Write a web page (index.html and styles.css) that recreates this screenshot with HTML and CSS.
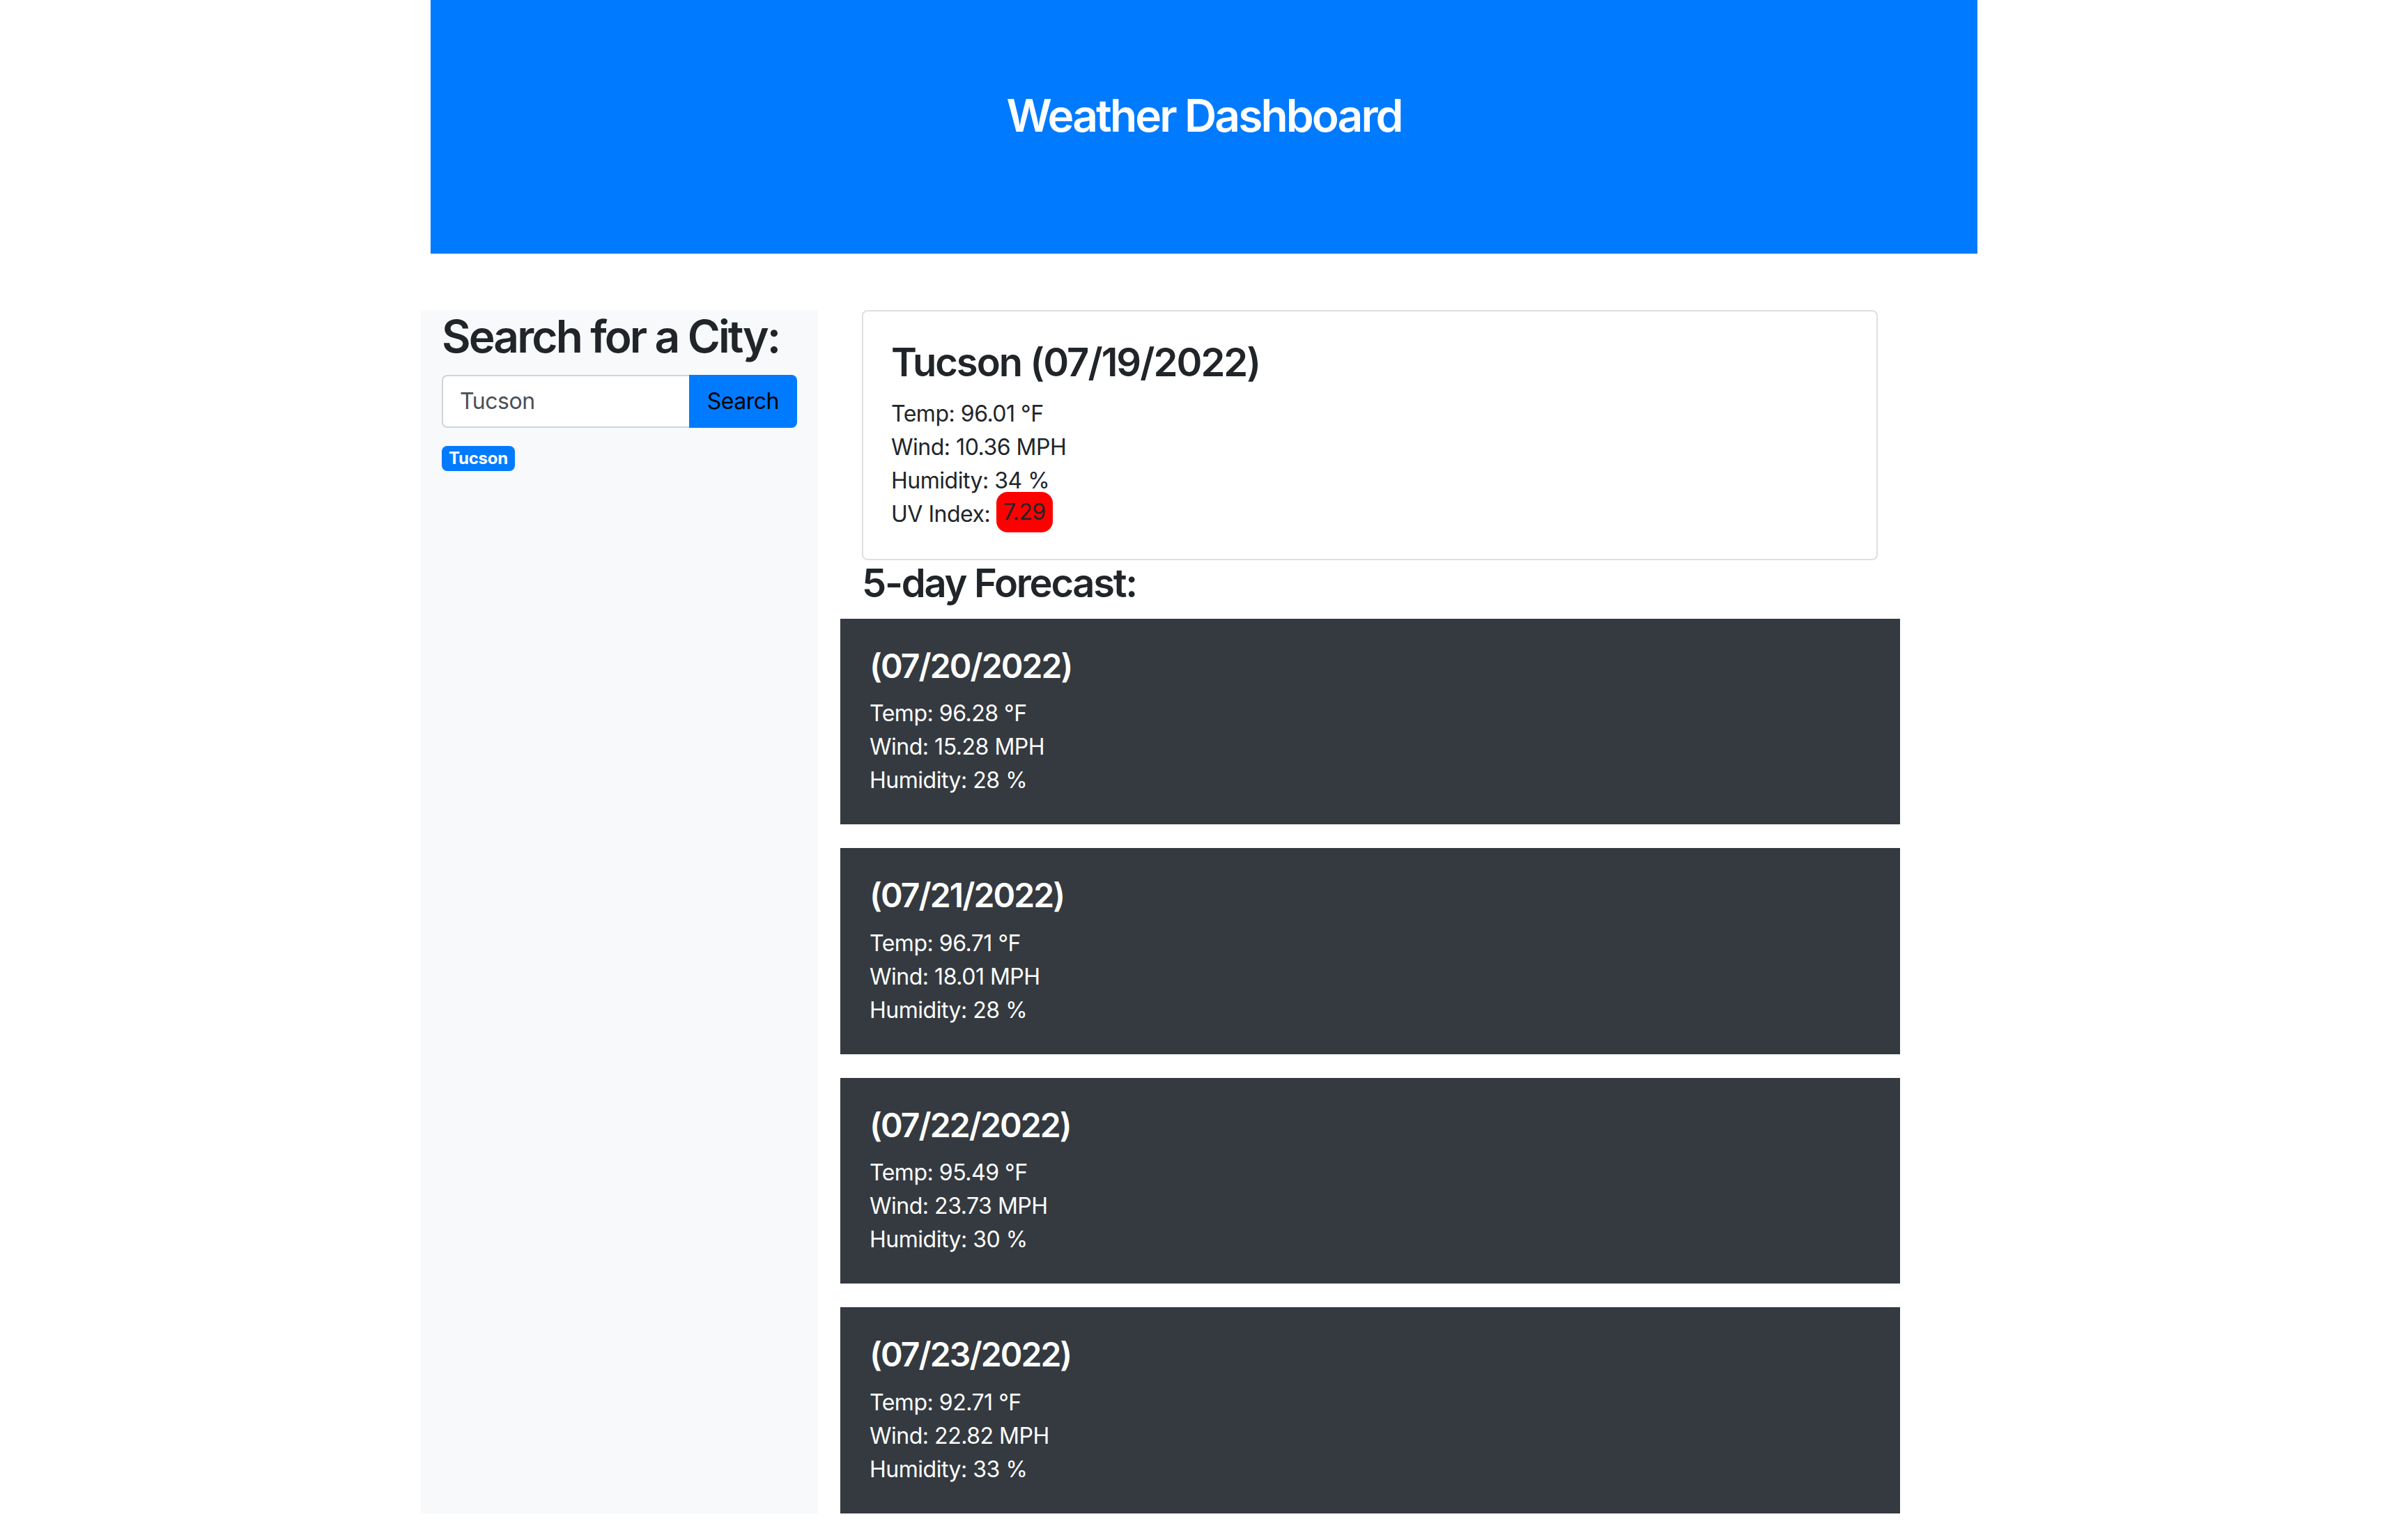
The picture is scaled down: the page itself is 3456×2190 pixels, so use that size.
FILE: index.html
```html
<!DOCTYPE html>
<html lang="en">
<head>
<meta charset="utf-8">
<title>Weather Dashboard</title>
<link rel="stylesheet" href="styles.css">
</head>
<body>
<div class="page">
  <header class="hero">
    <h1 class="hero-title">Weather Dashboard</h1>
  </header>
  <div class="content">
    <aside class="sidebar">
      <h2 class="side-title">Search for a City:</h2>
      <div class="search-group">
        <input class="search-input" type="text" value="Tucson">
        <button class="search-btn" type="button">Search</button>
      </div>
      <div class="history">
        <span class="city-badge">Tucson</span>
      </div>
    </aside>
    <main class="main">
      <section class="current-card">
        <h3 class="current-title">Tucson (07/19/2022)</h3>
        <div class="line">Temp: 96.01 °F</div>
        <div class="line">Wind: 10.36 MPH</div>
        <div class="line">Humidity: 34 %</div>
        <div class="line">UV Index: <span class="uv">7.29</span></div>
      </section>
      <h3 class="forecast-title">5-day Forecast:</h3>
      <div class="forecast-list">
        <div class="day-card">
          <h4 class="day-title">(07/20/2022)</h4>
          <div class="line">Temp: 96.28 °F</div>
          <div class="line">Wind: 15.28 MPH</div>
          <div class="line">Humidity: 28 %</div>
        </div>
        <div class="day-card">
          <h4 class="day-title">(07/21/2022)</h4>
          <div class="line">Temp: 96.71 °F</div>
          <div class="line">Wind: 18.01 MPH</div>
          <div class="line">Humidity: 28 %</div>
        </div>
        <div class="day-card">
          <h4 class="day-title">(07/22/2022)</h4>
          <div class="line">Temp: 95.49 °F</div>
          <div class="line">Wind: 23.73 MPH</div>
          <div class="line">Humidity: 30 %</div>
        </div>
        <div class="day-card">
          <h4 class="day-title">(07/23/2022)</h4>
          <div class="line">Temp: 92.71 °F</div>
          <div class="line">Wind: 22.82 MPH</div>
          <div class="line">Humidity: 33 %</div>
        </div>
      </div>
    </main>
  </div>
</div>
</body>
</html>
```

FILE: styles.css
```css
* {
  box-sizing: border-box;
}

body {
  margin: 0;
  background: #ffffff;
  color: #212529;
  font-family: Inter, "Liberation Sans", Arial, sans-serif;
  font-size: 32px;
  line-height: 1.5;
  letter-spacing: -0.015em;
}

.page {
  width: 2220px;
  margin: 0 auto;
}

.hero {
  height: 364px;
  background: #007bff;
  padding-top: 128px;
  text-align: center;
}

.hero-title {
  margin: 0;
  color: #ffffff;
  font-size: 64px;
  font-weight: 600;
  line-height: 1.2;
  letter-spacing: -0.045em;
}

.content {
  display: flex;
  gap: 63px;
  margin-top: 81px;
  margin-left: -14px;
}

.sidebar {
  width: 570px;
  flex: none;
  background: #f8f9fa;
  padding: 0 30px;
}

.side-title {
  margin: 0 0 16px;
  font-size: 64px;
  font-weight: 600;
  line-height: 1.2;
  letter-spacing: -0.045em;
  white-space: nowrap;
}

.search-group {
  display: flex;
  height: 76px;
}

.search-input {
  flex: 1;
  min-width: 0;
  height: 76px;
  border: 2px solid #ced4da;
  border-right: none;
  border-radius: 8px 0 0 8px;
  padding: 0 24px;
  font-family: Inter, "Liberation Sans", Arial, sans-serif;
  font-size: 32px;
  letter-spacing: -0.015em;
  color: #495057;
  background: #ffffff;
  outline: none;
}

.search-btn {
  height: 76px;
  border: 2px solid #007bff;
  border-radius: 0 8px 8px 0;
  background: #007bff;
  color: #000000;
  padding: 0 24px;
  font-family: Inter, "Liberation Sans", Arial, sans-serif;
  font-size: 32px;
  letter-spacing: -0.015em;
  line-height: 1.5;
}

.history {
  display: flex;
  margin-top: 26px;
}

.city-badge {
  background: #007bff;
  color: #ffffff;
  font-size: 24px;
  font-weight: 700;
  line-height: 1;
  letter-spacing: -0.01em;
  padding: 6px 10px;
  border-radius: 8px;
}

.main {
  width: 1458px;
  flex: none;
}

.current-card {
  border: 2px solid #dfdfdf;
  border-radius: 8px;
  padding: 40px 40px 38px;
}

.current-title {
  margin: 0 0 16px;
  font-size: 56px;
  font-weight: 600;
  line-height: 1.2;
  letter-spacing: -0.035em;
}

.line {
  line-height: 48px;
}

.uv {
  display: inline-block;
  background: #ff0000;
  border-radius: 16px;
  padding: 0 10px;
  line-height: 58px;
  vertical-align: middle;
  margin-top: -10px;
}

.forecast-title {
  margin: 0 0 16px;
  font-size: 56px;
  font-weight: 600;
  line-height: 1.2;
  letter-spacing: -0.04em;
}

.forecast-list {
  display: flex;
  flex-direction: column;
  gap: 34px;
  margin: 0 -32px 0 -31px;
}

.day-card {
  background: #343a40;
  color: #ffffff;
  padding: 39px 42px 39px;
}

.day-title {
  margin: 0 0 16px;
  font-size: 48px;
  font-weight: 600;
  line-height: 1.2;
  letter-spacing: -0.04em;
}
```
